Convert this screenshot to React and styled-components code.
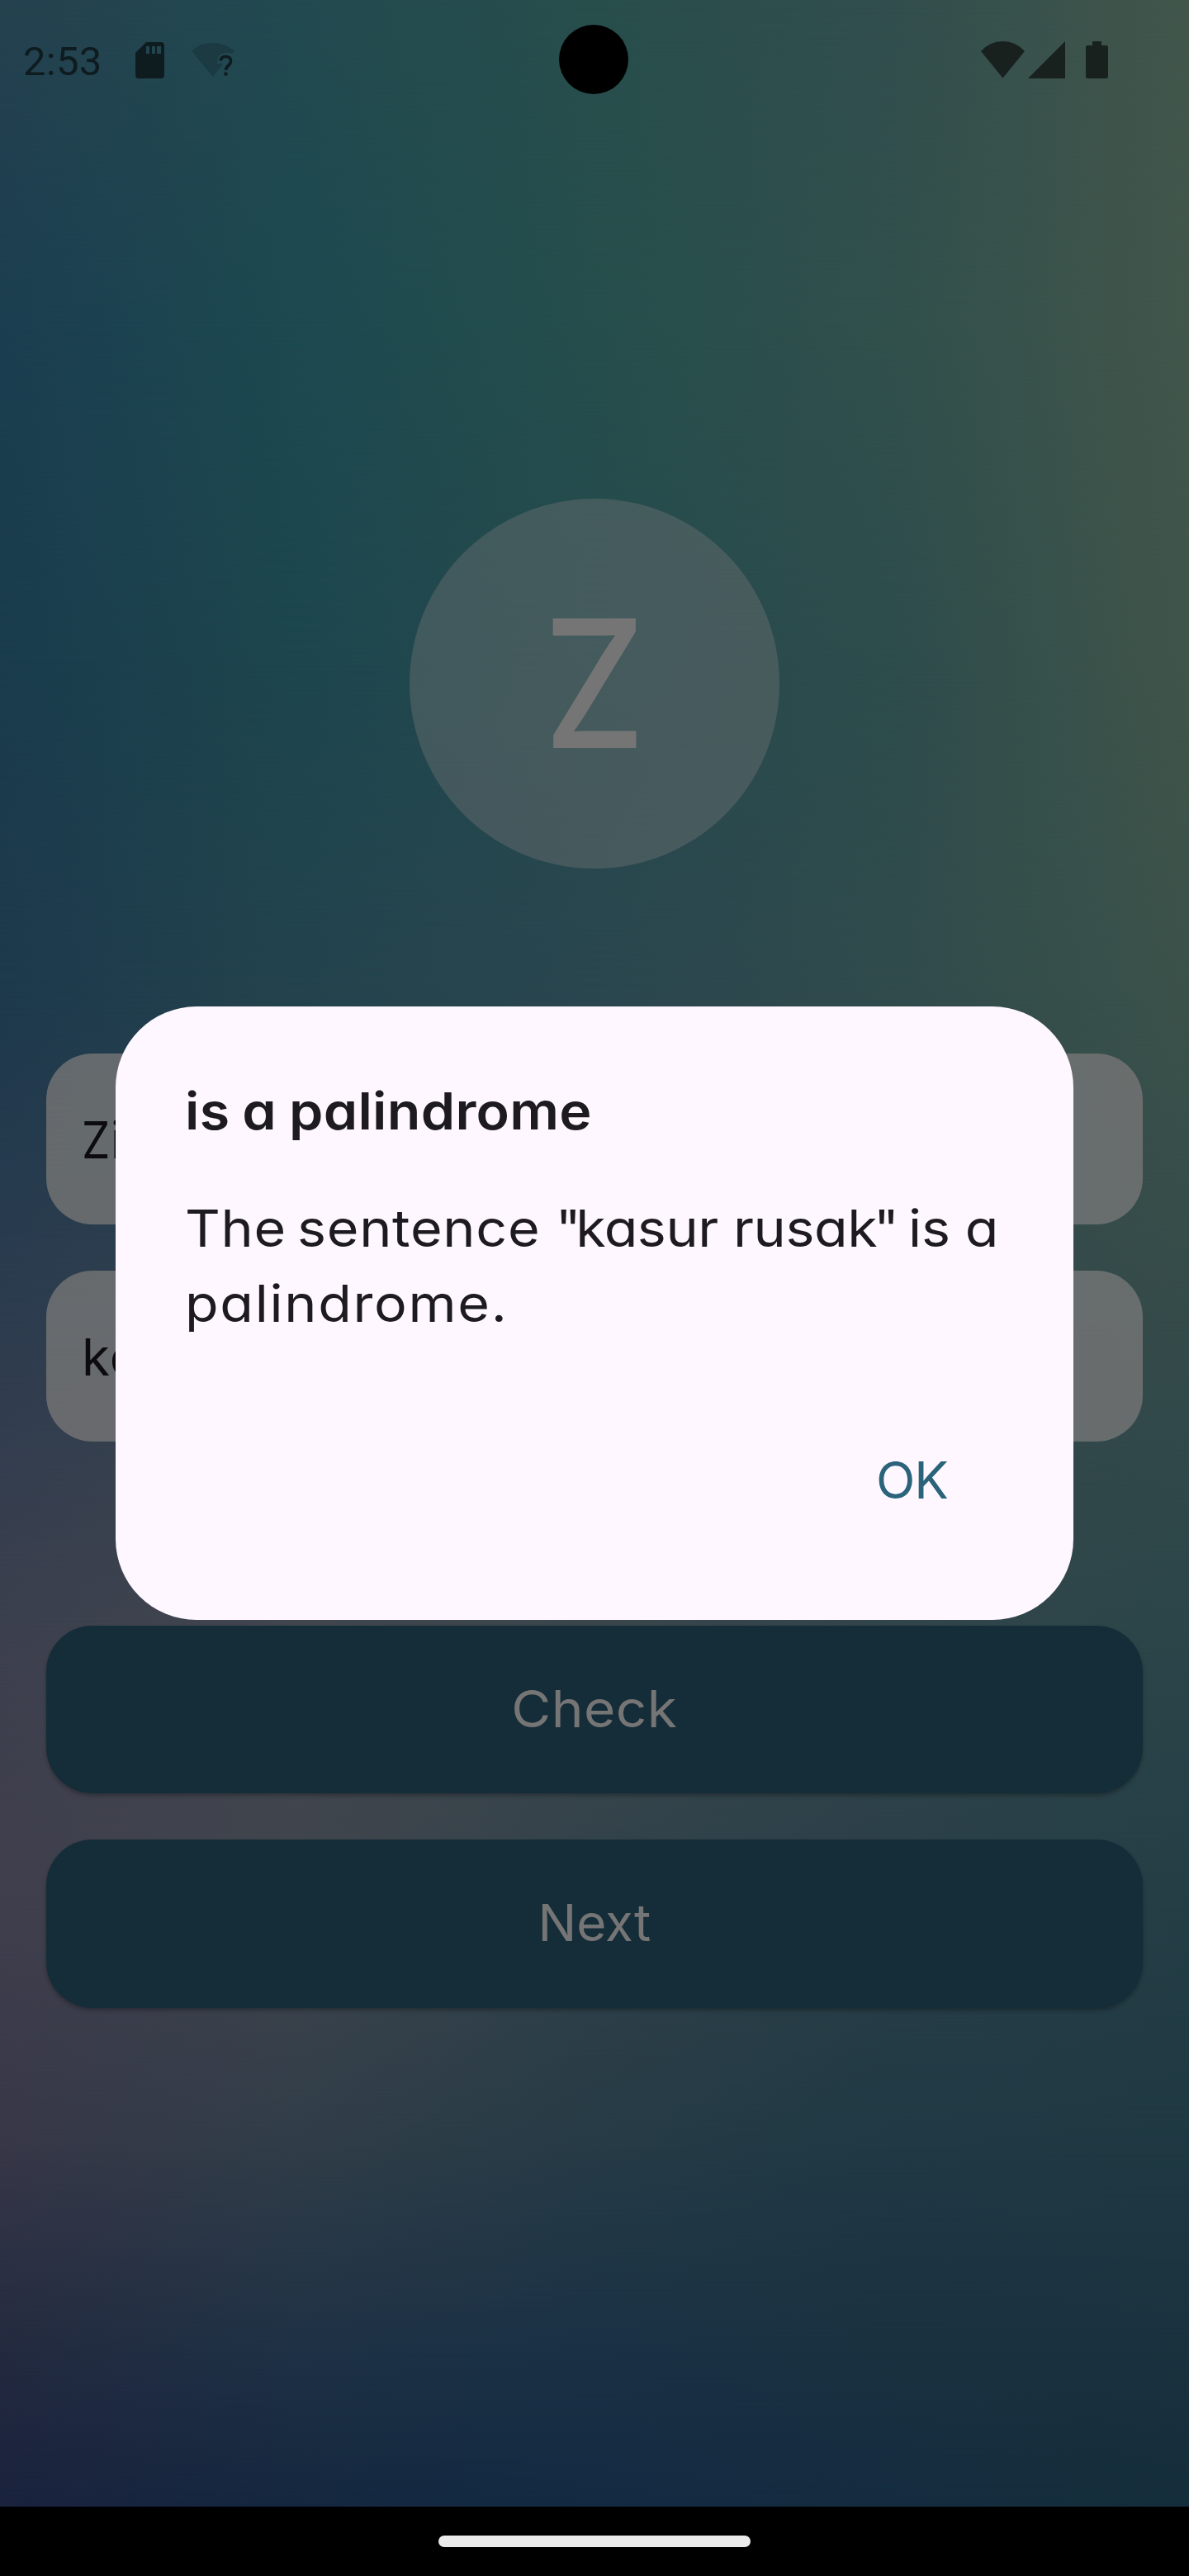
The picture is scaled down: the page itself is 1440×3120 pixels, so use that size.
import React from "react";
import styled, { createGlobalStyle } from "styled-components";

const GlobalStyle = createGlobalStyle`
  *, *::before, *::after { box-sizing: border-box; }
  body { margin: 0; background: #000; }
`;

const FONT = `Inter, "Open Sans", sans-serif`;

const Screen = styled.div`
  width: 1440px;
  height: 3120px;
  display: grid;
  grid-template-rows: 3036px 84px;
  grid-template-columns: 1440px;
  position: relative;
  overflow: hidden;
  font-family: ${FONT};
  font-feature-settings: "cv11" 1;
  font-size: 62px;
`;

const Backdrop = styled.div`
  grid-area: 1 / 1;
  display: grid;
`;

const BackdropRow = styled.div`
  grid-area: 1 / 1;
  background: linear-gradient(to right, ${(p) => p.$colors.join(", ")});
  mask-image: ${(p) =>
    p.$to === 0 ? "none" : `linear-gradient(to bottom, transparent ${p.$from}px, #000 ${p.$to}px)`};
`;

const Page = styled.div`
  grid-area: 1 / 1;
  display: flex;
  flex-direction: column;
  z-index: 1;
`;

const StatusBar = styled.header`
  height: 145px;
  padding: 0 98px 0 28px;
  display: flex;
  align-items: center;
  color: #0e1c20;
`;

const Clock = styled.span`
  font-family: Roboto, sans-serif;
  font-size: 49px;
  line-height: 60px;
  padding-top: 4px;
  letter-spacing: 0.3px;
  width: 136px;
`;

const StatusIcon = styled.svg`
  display: block;
  flex: none;
  margin-left: ${(p) => p.$gap || 0}px;
`;

const Spacer = styled.div`
  flex: 1;
`;

const SystemIcons = styled.div`
  display: flex;
  align-items: center;
  color: #19211f;
`;

const Camera = styled.div`
  position: absolute;
  z-index: 2;
  top: 30px;
  left: 677px;
  width: 84px;
  height: 84px;
  border-radius: 50%;
  background: #000;
`;

const Content = styled.main`
  padding: 459px 56px 0;
  display: flex;
  flex-direction: column;
`;

const Avatar = styled.div`
  align-self: center;
  width: 448px;
  height: 448px;
  border-radius: 50%;
  background: rgba(118, 118, 118, 0.39);
  display: flex;
  align-items: center;
  justify-content: center;
`;

const Initial = styled.span`
  color: #757575;
  font-size: 216px;
  font-weight: 450;
  line-height: 260px;
  transform: scaleX(0.89);
`;

const Fields = styled.div`
  margin-top: 224px;
  display: flex;
  flex-direction: column;
  gap: 55.5px;
`;

const Field = styled.div`
  height: 207.25px;
  border-radius: 56px;
  padding: 2px 44px 0 43px;
  display: flex;
  align-items: center;
  background: rgba(118, 118, 118, 0.8);
  color: #0c0c0e;
  letter-spacing: 1px;
`;

const Stretch = styled.span`
  display: inline-block;
  transform: scaleX(${(p) => p.$x});
  transform-origin: ${(p) => p.$origin || "left"} center;
`;

const Actions = styled.div`
  margin-top: 223px;
  display: flex;
  flex-direction: column;
  gap: 56px;
`;

const ActionButton = styled.button`
  height: 203.3px;
  border: 0;
  padding: 0 0 3px;
  border-radius: 56px;
  background: #152d38;
  color: #757575;
  font: inherit;
  font-feature-settings: inherit;
  letter-spacing: ${(p) => p.$tracking}px;
  box-shadow: 0 3px 5px rgba(0, 0, 0, 0.28);
`;

const Dialog = styled.section`
  position: absolute;
  z-index: 3;
  top: 1219px;
  left: 140px;
  width: 1160px;
  height: 742.5px;
  border-radius: 98px;
  padding: 81px 84px 84px;
  background: #fef7ff;
  color: #1d1b20;
  display: flex;
  flex-direction: column;
`;

const DialogTitle = styled.h2`
  margin: 0;
  font-size: 62px;
  font-weight: 600;
  line-height: 91px;
  letter-spacing: 0.3px;
  word-spacing: -2px;
`;

const DialogText = styled.p`
  margin: 51px 0 0;
  line-height: 91px;
  letter-spacing: 1.6px;
  white-space: nowrap;
`;

const Run = styled.span`
  letter-spacing: ${(p) => p.$tracking}px;
  word-spacing: ${(p) => p.$word}px;
`;

const Quote = styled.span`
  margin-left: ${(p) => p.$shift}px;
  letter-spacing: -6px;
`;

const DialogActions = styled.div`
  margin-top: 78px;
  padding-right: 68px;
  display: flex;
  justify-content: flex-end;
`;

const TextButton = styled.button`
  border: 0;
  padding: 0;
  background: none;
  font: inherit;
  line-height: 182px;
  color: #2b637b;
  letter-spacing: -1px;
`;

const NavBar = styled.footer`
  background: #000;
  display: flex;
  align-items: center;
  justify-content: center;
`;

const HomePill = styled.div`
  width: 378px;
  height: 14px;
  border-radius: 7px;
  background: #ebebeb;
`;

const rows = [
  { y: 0, colors: ["#25414f", "#224a50", "#284e4c", "#314e4d", "#42564b"] },
  { y: 400, colors: ["#1b3e50", "#1d4950", "#254e4c", "#31504c", "#42564b"] },
  { y: 800, colors: ["#1a3c4c", "#1d464e", "#264a4e", "#2d4c4c", "#40554a"] },
  { y: 1200, colors: ["#1d394c", "#23434d", "#2a464f", "#304b4c", "#3b524a"] },
  { y: 1600, colors: ["#2d3c4f", "#32414f", "#34454f", "#33484c", "#354b4a"] },
  { y: 2000, colors: ["#3d404e", "#42464e", "#3b464c", "#31444a", "#2b4549"] },
  { y: 2300, colors: ["#403f4d", "#40454d", "#31424a", "#2a3f48", "#243e46"] },
  { y: 2600, colors: ["#373748", "#303d48", "#263b46", "#203944", "#1f3943"] },
  { y: 2850, colors: ["#232a3f", "#1e3145", "#1a3145", "#1a3140", "#1a323e"] },
  { y: 3036, colors: ["#1a223d", "#14273f", "#132a43", "#142c3f", "#142e3a"] },
];

const Wifi = () => (
  <StatusIcon width="53" height="45" viewBox="0 0 53 45">
    <path d="M0 12Q11 0 26.5 0T53 12L26.5 44.500Z" fill="currentColor" />
  </StatusIcon>
);

export default function App() {
  return (
    <>
      <GlobalStyle />
      <Screen>
        <Backdrop>
          {rows.map((row, i) => (
            <BackdropRow key={row.y} $colors={row.colors} $from={i ? rows[i - 1].y : 0} $to={row.y} />
          ))}
        </Backdrop>
        <Page>
          <StatusBar>
            <Clock>2:53</Clock>
            <StatusIcon width="35" height="44" viewBox="0 0 35 44">
              <path
                fillRule="evenodd"
                fill="currentColor"
                d="M13 0H31Q35 0 35 4V40Q35 44 31 44H4Q0 44 0 40V13ZM13 5V14H17V5ZM20 5V14H24V5ZM26 5V14H31V5Z"
              />
            </StatusIcon>
            <StatusIcon $gap={33} width="53" height="42" viewBox="0 0 53 42">
              <path
                d="M0 9.500Q11 0 25.500 0T52 9.500L49 13Q45 11 40 12Q31 13 31 25H38L26 41Z"
                fill="#1b3a41"
              />
              <path
                d="M35.500 21.500Q35.500 16.500 41.500 16.500Q47.500 16.500 47.500 22Q47.500 25 44.500 27.500Q41.500 30 41.500 33"
                fill="none"
                stroke="currentColor"
                strokeWidth="3.600"
              />
              <rect x="39.500" y="35.500" width="4" height="4" fill="currentColor" />
            </StatusIcon>
            <Spacer />
            <SystemIcons>
              <Wifi />
              <StatusIcon $gap={4} width="45" height="45" viewBox="0 0 45 45">
                <path d="M45 0V45H0Z" fill="currentColor" />
              </StatusIcon>
              <StatusIcon $gap={25} width="27" height="45" viewBox="0 0 27 45">
                <path d="M8 0H19V5H25.500L27 6.500V43.500L25.500 45H1.500L0 43.500V6.500L1.500 5H8Z" fill="currentColor" />
              </StatusIcon>
            </SystemIcons>
          </StatusBar>
          <Content>
            <Avatar>
              <Initial>Z</Initial>
            </Avatar>
            <Fields>
              <Field>
                <Stretch $x={0.88}>Zi</Stretch>
              </Field>
              <Field>kasur rusak</Field>
            </Fields>
            <Actions>
              <ActionButton $tracking={0.4}>
                <Stretch $x={1.06} $origin="center">Check</Stretch>
              </ActionButton>
              <ActionButton $tracking={0}>Next</ActionButton>
            </Actions>
          </Content>
        </Page>
        <NavBar>
          <HomePill />
        </NavBar>
        <Camera />
        <Dialog>
          <DialogTitle>
            <Stretch $x={1.07}>is a palindrome</Stretch>
          </DialogTitle>
          <DialogText>
            <Stretch $x={1.07}>
              <Run $tracking={0.7} $word={-6}>The sentence </Run>
              <Quote $shift={5}>"</Quote>
              <Run $tracking={-0.4} $word={0}>kasur rusak</Run>
              <Quote $shift={-4}>"</Quote>
              <Run $tracking={0} $word={-1}> is a</Run>
              <br />
              palindrome.
            </Stretch>
          </DialogText>
          <DialogActions>
            <TextButton>OK</TextButton>
          </DialogActions>
        </Dialog>
      </Screen>
    </>
  );
}
